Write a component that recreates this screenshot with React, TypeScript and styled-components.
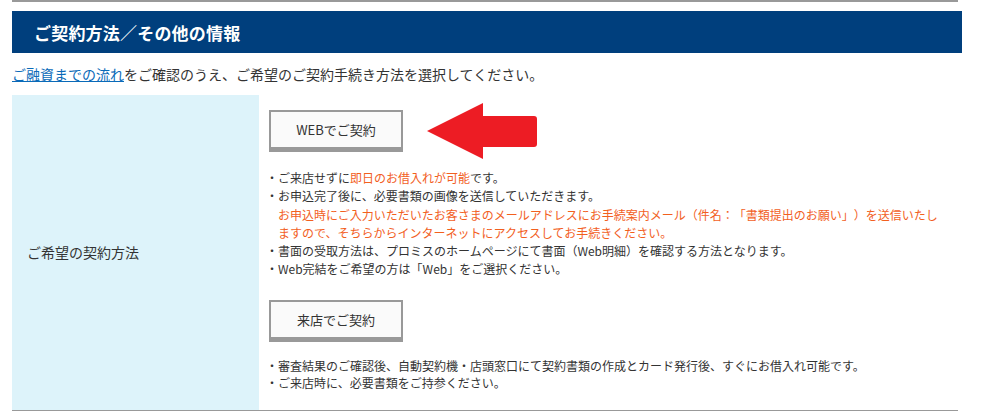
import React from "react";
import styled, { createGlobalStyle } from "styled-components";

const GlobalStyle = createGlobalStyle`
  html, body {
    margin: 0;
    padding: 0;
    background: #fff;
  }
  body {
    font-family: "Noto Sans CJK JP", "Noto Sans", sans-serif;
    color: #333;
    text-spacing-trim: space-all;
  }
`;

const Page = styled.div`
  width: 950px;
  padding-left: 12px;
`;

const TopRule = styled.div`
  width: 946px;
  height: 2px;
  background: #999;
  margin-bottom: 9px;
`;

const SectionTitle = styled.h2`
  margin: 0;
  height: 42px;
  display: flex;
  align-items: center;
  padding-left: 22px;
  background: #003f7d;
  color: #fff;
  font-size: 17px;
  font-weight: bold;
  letter-spacing: 0.2px;
`;

const Intro = styled.p`
  margin: 10px 0 10px;
  font-size: 14px;
  line-height: 22px;
  color: #333;

  a {
    color: #0a6ab8;
    text-decoration: underline;
  }
`;

const Table = styled.div`
  width: 946px;
  display: grid;
  grid-template-columns: 247px 1fr;
  border-bottom: 1px solid #999;
`;

const HeadCell = styled.div`
  background: #ddf3fa;
  display: flex;
  align-items: center;
  padding-left: 15px;
  font-size: 14px;
  color: #333;
`;

const BodyCell = styled.div`
  padding: 15px 10px 19px 10px;
`;

const ButtonRow = styled.div<{ $top?: number }>`
  display: flex;
  align-items: center;
  gap: 24px;
  margin-top: ${(p) => p.$top ?? 0}px;
`;

const ChoiceButton = styled.div`
  box-sizing: border-box;
  width: 134px;
  height: 42px;
  display: flex;
  align-items: center;
  justify-content: center;
  background: #fafafa;
  border: 2px solid #999;
  border-bottom-width: 5px;
  font-size: 13px;
  color: #333;
  cursor: pointer;
`;

const Arrow = styled.svg`
  display: block;
  margin: -7px 0;
`;

const NoteList = styled.ul<{ $lh: number; $top: number }>`
  list-style: none;
  margin: ${(p) => p.$top}px 0 0 -3px;
  padding: 0;
  font-size: 12px;
  line-height: ${(p) => p.$lh}px;
  color: #333;
`;

const NoteItem = styled.li<{ $sub?: boolean }>`
  padding-left: ${(p) => (p.$sub ? 12 : 0)}px;
  &::before {
    content: ${(p) => (p.$sub ? '""' : '"・"')};
  }
`;

const Em = styled.span`
  color: #f2601e;
`;

const storeNotes = [
  "審査結果のご確認後、自動契約機・店頭窓口にて契約書類の作成とカード発行後、すぐにお借入れ可能です。",
  "ご来店時に、必要書類をご持参ください。",
];

const App = () => {
  const webNotes = [
    {
      text: (
        <>
          ご来店せずに<Em>即日のお借入れが可能</Em>です。
        </>
      ),
    },
    { text: <>お申込完了後に、必要書類の画像を送信していただきます。</> },
    {
      sub: true,
      text: (
        <Em>
          お申込時にご入力いただいたお客さまのメールアドレスにお手続案内メール（件名：「書類提出のお願い」）を送信いたしますので、そちらからインターネットにアクセスしてお手続きください。
        </Em>
      ),
    },
    {
      text: (
        <>
          書面の受取方法は、プロミスのホームページにて書面（Web明細）を確認する方法となります。
        </>
      ),
    },
    { text: <>Web完結をご希望の方は「Web」をご選択ください。</> },
  ];

  return (
    <Page>
      <GlobalStyle />
      <TopRule />
      <SectionTitle>ご契約方法／その他の情報</SectionTitle>
      <Intro>
        <a href="#flow">ご融資までの流れ</a>
        をご確認のうえ、ご希望のご契約手続き方法を選択してください。
      </Intro>
      <Table>
        <HeadCell>ご希望の契約方法</HeadCell>
        <BodyCell>
          <ButtonRow>
            <ChoiceButton>WEBでご契約</ChoiceButton>
            <Arrow width="110" height="56" viewBox="0 0 110 56">
              <path
                d="M0 28 L56 0 L56 13 L107 13 Q110 13 110 16 L110 41 Q110 44 107 44 L56 44 L56 56 Z"
                fill="#ed1c24"
              />
            </Arrow>
          </ButtonRow>
          <NoteList $lh={18.3} $top={17}>
            {webNotes.map((n, i) => (
              <NoteItem key={i} $sub={n.sub}>
                {n.text}
              </NoteItem>
            ))}
          </NoteList>
          <ButtonRow $top={21}>
            <ChoiceButton>来店でご契約</ChoiceButton>
          </ButtonRow>
          <NoteList $lh={17} $top={15}>
            {storeNotes.map((t, i) => (
              <NoteItem key={i}>{t}</NoteItem>
            ))}
          </NoteList>
        </BodyCell>
      </Table>
    </Page>
  );
};

export default App;
